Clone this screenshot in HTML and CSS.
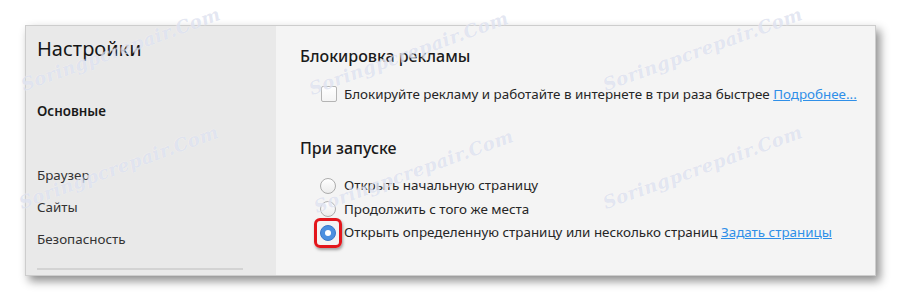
FILE: index.html
```html
<!DOCTYPE html>
<html lang="ru">
<head>
<meta charset="utf-8">
<title>Настройки</title>
<link rel="stylesheet" href="styles.css">
</head>
<body>
<div class="window">
  <aside class="sidebar">
    <h1 class="title">Настройки</h1>
    <div class="nav-active">Основные</div>
    <ul class="nav">
      <li>Браузер</li>
      <li>Сайты</li>
      <li>Безопасность</li>
    </ul>
    <div class="sep"></div>
  </aside>
  <main class="main">
    <h2 class="heading">Блокировка рекламы</h2>
    <label class="row check-row"><span class="checkbox"></span>Блокируйте рекламу и работайте в интернете в три раза быстрее <a class="link" href="#">Подробнее...</a></label>
    <h2 class="heading heading-2">При запуске</h2>
    <div class="radios">
      <label class="row"><span class="radio"></span>Открыть начальную страницу</label>
      <label class="row"><span class="radio"></span>Продолжить с того же места</label>
      <label class="row"><span class="radio checked"><span class="highlight"></span></span>Открыть определенную страницу или несколько страниц <a class="link" href="#">Задать страницы</a></label>
    </div>
  </main>
</div>
<div class="wm wm1">Soringpcrepair.Com</div>
<div class="wm wm2">Soringpcrepair.Com</div>
<div class="wm wm4">Soringpcrepair.Com</div>
<div class="wm wm5">Soringpcrepair.Com</div>
<div class="wm wm7">Soringpcrepair.Com</div>
<div class="wm wm8">Soringpcrepair.Com</div>
</body>
</html>
```
FILE: styles.css
```css
* { box-sizing: border-box; }
html, body { margin: 0; padding: 0; }
body {
  background: #ffffff;
  font-family: "Noto Sans", "Open Sans", sans-serif;
  color: #262626;
  width: 900px;
  height: 301px;
  overflow: hidden;
  position: relative;
}
.window {
  margin: 25px 0 0 25px;
  width: 851px;
  height: 251px;
  display: flex;
  border: 1px solid #cdcdcd;
  box-shadow: 4px 5px 9px rgba(0,0,0,0.45);
  background: #f4f4f4;
}
.sidebar {
  flex: none;
  width: 250px;
  background: #e9e9e9;
  padding: 8px 0 0 11px;
}
.title {
  margin: 0;
  font-size: 20px;
  font-weight: 400;
  line-height: 30px;
  color: #161616;
}
.nav-active {
  margin-top: 37px;
  font-size: 13.4px;
  font-weight: 600;
  line-height: 20px;
  color: #1a1a1a;
}
.nav {
  list-style: none;
  margin: 38px 0 0 0;
  padding: 0;
}
.nav li {
  font-size: 13.4px;
  line-height: 32px;
  color: #333333;
}
.sep {
  margin-top: 13px;
  width: 206px;
  height: 2px;
  background: #d3d3d3;
}
.main {
  flex: 1;
  min-width: 0;
  padding: 18px 0 0 24px;
}
.heading {
  margin: 0;
  font-size: 16px;
  font-weight: 500;
  line-height: 24px;
  color: #1a1a1a;
}
.heading-2 { margin-top: 31px; }
.row {
  display: flex;
  align-items: center;
  font-size: 13.4px;
  color: #262626;
  white-space: pre;
}
.check-row {
  margin-top: 15px;
  padding-left: 21px;
  line-height: 22px;
}
.checkbox {
  width: 16px;
  height: 16px;
  border: 1px solid #b4b4b4;
  border-radius: 2px;
  background: linear-gradient(#ffffff, #f4f4f4);
  margin-right: 7px;
  flex: none;
}
.radios { margin-top: 14px; padding-left: 20px; }
.radios .row { line-height: 23.5px; }
.radio {
  position: relative;
  width: 16px;
  height: 16px;
  border-radius: 50%;
  border: 1px solid #adadad;
  background: linear-gradient(#ffffff, #ececec);
  margin-right: 8px;
  flex: none;
}
.radio.checked {
  border-color: #3a78c9;
  background: #4c90e0;
}
.radio.checked::after {
  content: "";
  position: absolute;
  left: 4px;
  top: 4px;
  width: 6px;
  height: 6px;
  border-radius: 50%;
  background: #ffffff;
}
.highlight {
  position: absolute;
  left: -7px;
  top: -8px;
  width: 28px;
  height: 30px;
  border: 3px solid #e3161c;
  border-radius: 6px;
  box-shadow: 1px 2px 3px rgba(0,0,0,0.35);
}
.link {
  color: #2f8fe8;
  text-decoration: underline;
}
.wm {
  position: absolute;
  font-family: "DejaVu Serif", serif;
  font-style: italic;
  font-weight: bold;
  font-size: 18px;
  letter-spacing: 0.5px;
  color: rgba(170, 180, 215, 0.32);
  text-shadow: 0 0 1px rgba(255,255,255,0.8);
  transform: rotate(-20deg);
  transform-origin: left bottom;
  white-space: nowrap;
  pointer-events: none;
}
.wm1 { left: 25px; top: 74px; }
.wm2 { left: 23px; top: 192px; }
.wm4 { left: 313px; top: 78px; }
.wm5 { left: 318px; top: 196px; }
.wm7 { left: 607px; top: 74px; }
.wm8 { left: 607px; top: 192px; }
```
